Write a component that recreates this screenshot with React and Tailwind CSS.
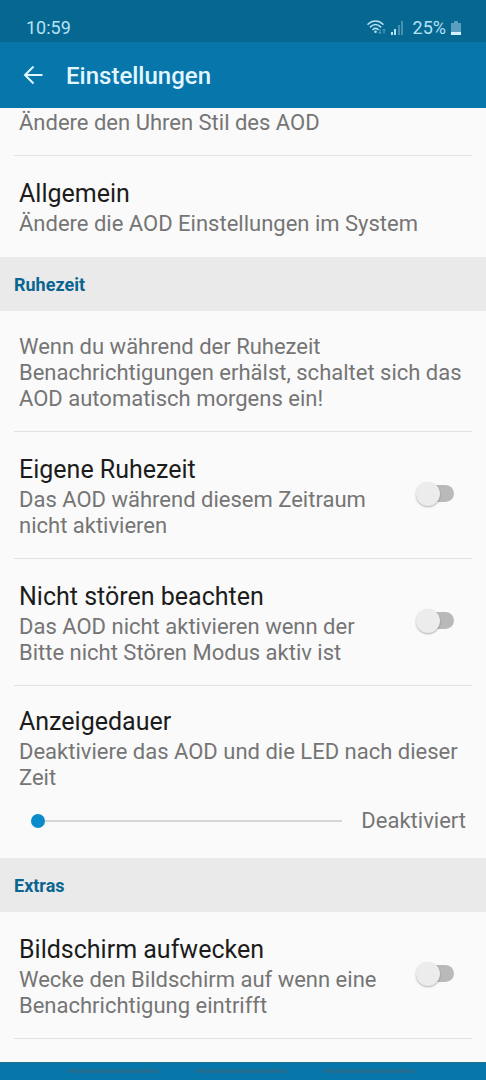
import React, { useState } from 'react';

const StatusBar = () => (
  <div className="flex h-[42px] items-center justify-between bg-[#066890] pl-[26px] pr-6 pt-[14px] text-lg text-[#b5e2f5]">
    <span>10:59</span>
    <div className="flex items-center">
      <svg className="h-5 w-5" viewBox="0 0 20 20" fill="none" aria-hidden="true">
        <g stroke="#b5e2f5" strokeWidth="1.5" strokeLinecap="round">
          <path d="M1 6.200C5.400 1.900 11.600 1.900 16 6.200" />
          <path d="M3.400 8.900C6.500 6 10.500 6 13.600 8.900" />
          <path d="M5.900 11.500C7.500 10.100 9.500 10.100 11.100 11.500" />
        </g>
        <circle cx="8.5" cy="13.700" r="1.300" fill="#b5e2f5" />
        <path d="M13 11v4.500M11.700 14.200l1.300 1.500 1.300-1.500M17 15.700v-4.500M15.700 12.500l1.300-1.500 1.300 1.500" stroke="#5a9fbd" strokeWidth="1" />
      </svg>
      <svg className="ml-1 h-4 w-[14px]" viewBox="0 0 14 16" aria-hidden="true">
        <rect x="0" y="12" width="2" height="3" fill="#b5e2f5" />
        <rect x="3" y="9" width="2" height="6" fill="#b5e2f5" />
        <rect x="7" y="5" width="2" height="10" fill="#4391b2" />
        <rect x="10" y="1" width="2" height="14" fill="#4391b2" />
      </svg>
      <span className="ml-2">25%</span>
      <svg className="ml-1 h-4 w-[12px]" viewBox="0 0 12 16" aria-hidden="true">
        <path d="M4 1h4v2h3v12H1V3h3z" fill="#5a9fbd" />
        <rect x="1" y="12" width="10" height="3" fill="#d3f0fc" />
      </svg>
    </div>
  </div>
);

const AppBar = () => (
  <header className="flex h-[66px] items-center bg-[#0777ab] pl-[23px] pt-[2px] text-[#e2f6ff]">
    <button type="button" aria-label="Zurück" className="mr-[23px]">
      <svg className="h-5 w-5" viewBox="0 0 20 20" fill="none" stroke="currentColor" strokeWidth="2" aria-hidden="true">
        <path d="M19.500 9H2.500M10.500 0.500L2 9l8.500 8.500" />
      </svg>
    </button>
    <h1 className="text-2xl font-medium">Einstellungen</h1>
  </header>
);

const SectionHeader = ({ children }) => (
  <h2 className="flex h-[54px] items-center bg-[#eaeaea] px-[14px] pt-[2px] text-lg font-bold text-[#0a6590]">
    {children}
  </h2>
);

const Divider = () => <hr className="mx-[14px] border-t border-[#e2e2e2]" />;

const Title = ({ children }) => (
  <span className="block text-[25px] leading-[35px] text-[#1c1c1c]">{children}</span>
);

const Description = ({ children }) => (
  <span className="block text-[22px] leading-[26px] text-[#757575]">{children}</span>
);

const SwitchRow = ({ title, description }) => {
  const [checked, setChecked] = useState(false);

  return (
    <label className="flex items-center justify-between pb-[19px] pl-[19px] pr-8 pt-5">
      <span className="max-w-[364px]">
        <Title>{title}</Title>
        <Description>{description}</Description>
      </span>
      <input
        type="checkbox"
        role="switch"
        checked={checked}
        onChange={(e) => setChecked(e.target.checked)}
        className="relative mb-1 h-[17px] w-9 shrink-0 appearance-none rounded-full bg-[#b9b9b9] before:absolute before:-left-[2px] before:-top-[3px] before:h-6 before:w-6 before:rounded-full before:bg-[#ececec] before:shadow-[0_1px_2px_rgba(0,0,0,0.3)] checked:bg-[#83bbd5] checked:before:left-[14px] checked:before:bg-[#0a8bcc]"
      />
    </label>
  );
};

const DurationRow = () => {
  const [minutes, setMinutes] = useState(0);

  return (
    <div className="pb-[24px] pl-[19px] pr-5 pt-[18px]">
      <label htmlFor="duration">
        <Title>Anzeigedauer</Title>
        <Description>Deaktiviere das AOD und die LED nach dieser Zeit</Description>
      </label>
      <div className="mt-[17px] flex items-center">
        <input
          id="duration"
          type="range"
          min="0"
          max="60"
          value={minutes}
          onChange={(e) => setMinutes(Number(e.target.value))}
          className="ml-3 mr-[19px] h-4 min-w-0 flex-1 appearance-none bg-transparent [&::-webkit-slider-runnable-track]:h-[2px] [&::-webkit-slider-runnable-track]:bg-[#d6d6d6] [&::-webkit-slider-thumb]:-mt-[6px] [&::-webkit-slider-thumb]:h-[14px] [&::-webkit-slider-thumb]:w-[14px] [&::-webkit-slider-thumb]:appearance-none [&::-webkit-slider-thumb]:rounded-full [&::-webkit-slider-thumb]:bg-[#0a8bcc]"
        />
        <Description>{minutes === 0 ? 'Deaktiviert' : `${minutes} Min.`}</Description>
      </div>
    </div>
  );
};

const NavigationBar = () => (
  <footer className="flex h-[18px] justify-center gap-9 border-t border-[#2b6f8f] bg-[#0777ab] pr-1 pt-[6px]">
    <span className="h-1 w-[92px] rounded-full bg-[#206d92]" />
    <span className="h-1 w-[92px] rounded-full bg-[#206d92]" />
    <span className="h-1 w-[92px] rounded-full bg-[#206d92]" />
  </footer>
);

export default function App() {
  return (
    <div className="flex min-h-screen flex-col bg-[#fafafa] font-['Roboto',sans-serif]">
      <StatusBar />
      <AppBar />
      <main className="flex-1">
        <div className="px-[19px] pb-[19px] pt-[2px]">
          <Description>Ändere den Uhren Stil des AOD</Description>
        </div>
        <Divider />
        <div className="px-[19px] pb-5 pt-5">
          <Title>Allgemein</Title>
          <Description>Ändere die AOD Einstellungen im System</Description>
        </div>

        <SectionHeader>Ruhezeit</SectionHeader>
        <div className="px-[19px] pb-[19px] pt-[23px]">
          <Description>
            Wenn du während der Ruhezeit Benachrichtigungen erhälst, schaltet sich das AOD automatisch morgens ein!
          </Description>
        </div>
        <Divider />
        <SwitchRow title="Eigene Ruhezeit" description="Das AOD während diesem Zeitraum nicht aktivieren" />
        <Divider />
        <SwitchRow
          title="Nicht stören beachten"
          description="Das AOD nicht aktivieren wenn der Bitte nicht Stören Modus aktiv ist"
        />
        <Divider />
        <DurationRow />

        <SectionHeader>Extras</SectionHeader>
        <SwitchRow
          title="Bildschirm aufwecken"
          description="Wecke den Bildschirm auf wenn eine Benachrichtigung eintrifft"
        />
        <Divider />
      </main>
      <NavigationBar />
    </div>
  );
}
